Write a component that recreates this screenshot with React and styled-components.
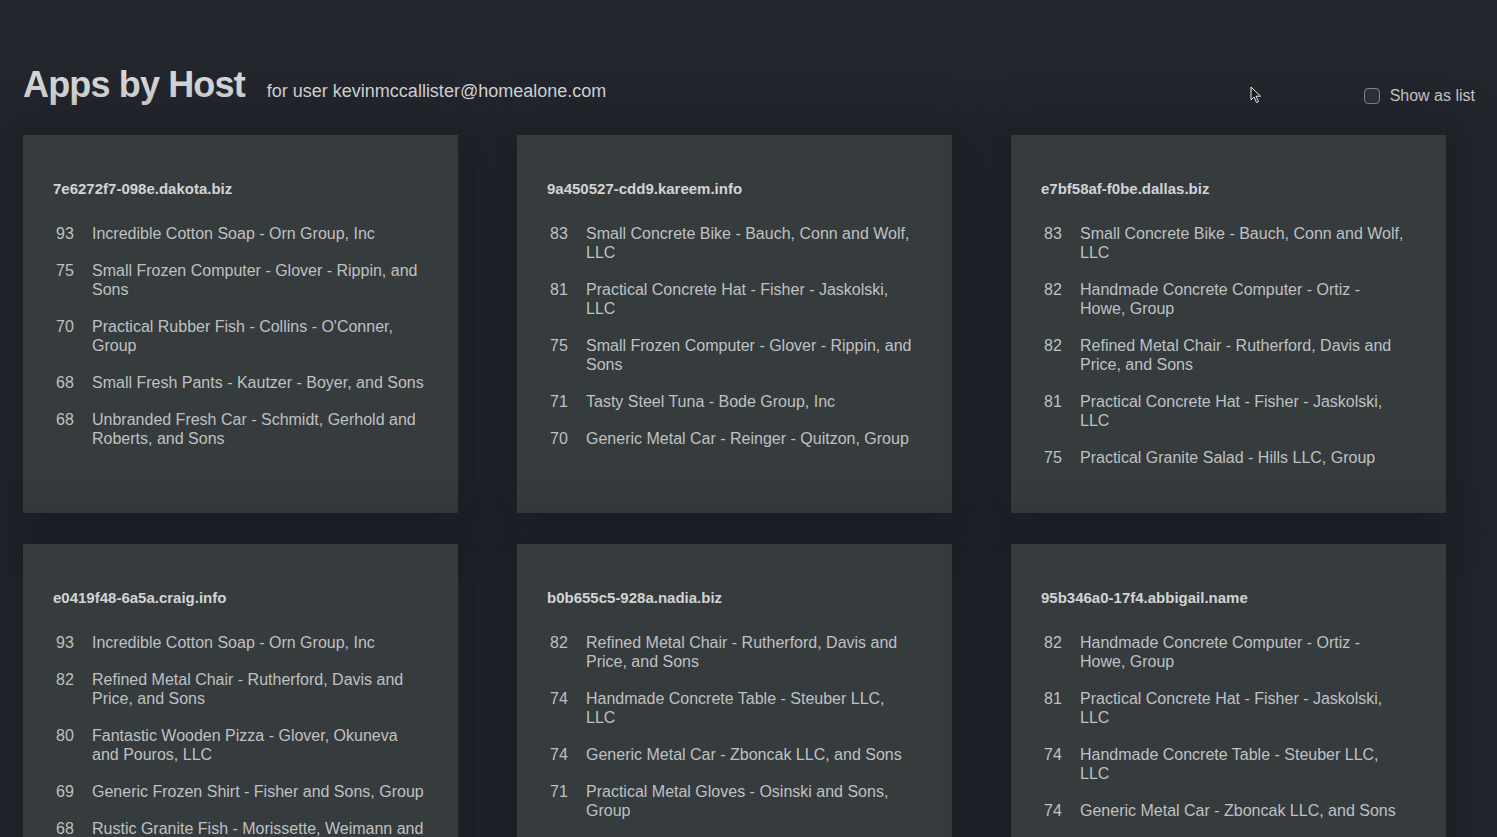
import React from 'react';
import styled, { createGlobalStyle } from 'styled-components';

const GlobalStyle = createGlobalStyle`
  html, body {
    margin: 0;
    padding: 0;
    overflow: hidden;
    background: #23262d;
  }
  body {
    font-family: 'Liberation Sans', Arial, Helvetica, sans-serif;
    color: #c4c6c7;
  }
`;

// "\n" marks where the original layout breaks a name that would otherwise fit
const hosts = [
  {
    name: '7e6272f7-098e.dakota.biz',
    apps: [
      [93, 'Incredible Cotton Soap - Orn Group, Inc'],
      [75, 'Small Frozen Computer - Glover - Rippin, and Sons'],
      [70, "Practical Rubber Fish - Collins - O'Conner, Group"],
      [68, 'Small Fresh Pants - Kautzer - Boyer, and Sons'],
      [68, 'Unbranded Fresh Car - Schmidt, Gerhold and Roberts, and Sons'],
    ],
  },
  {
    name: '9a450527-cdd9.kareem.info',
    apps: [
      [83, 'Small Concrete Bike - Bauch, Conn and Wolf, LLC'],
      [81, 'Practical Concrete Hat - Fisher - Jaskolski, LLC'],
      [75, 'Small Frozen Computer - Glover - Rippin, and Sons'],
      [71, 'Tasty Steel Tuna - Bode Group, Inc'],
      [70, 'Generic Metal Car - Reinger - Quitzon, Group'],
    ],
  },
  {
    name: 'e7bf58af-f0be.dallas.biz',
    apps: [
      [83, 'Small Concrete Bike - Bauch, Conn and Wolf, LLC'],
      [82, 'Handmade Concrete Computer - Ortiz -\nHowe, Group'],
      [82, 'Refined Metal Chair - Rutherford, Davis and Price, and Sons'],
      [81, 'Practical Concrete Hat - Fisher - Jaskolski, LLC'],
      [75, 'Practical Granite Salad - Hills LLC, Group'],
    ],
  },
  {
    name: 'e0419f48-6a5a.craig.info',
    apps: [
      [93, 'Incredible Cotton Soap - Orn Group, Inc'],
      [82, 'Refined Metal Chair - Rutherford, Davis and Price, and Sons'],
      [80, 'Fantastic Wooden Pizza - Glover, Okuneva and Pouros, LLC'],
      [69, 'Generic Frozen Shirt - Fisher and Sons, Group'],
      [68, 'Rustic Granite Fish - Morissette, Weimann and Sons'],
    ],
  },
  {
    name: 'b0b655c5-928a.nadia.biz',
    apps: [
      [82, 'Refined Metal Chair - Rutherford, Davis and Price, and Sons'],
      [74, 'Handmade Concrete Table - Steuber LLC,\nLLC'],
      [74, 'Generic Metal Car - Zboncak LLC, and Sons'],
      [71, 'Practical Metal Gloves - Osinski and Sons, Group'],
      [70, 'Generic Metal Car - Reinger - Quitzon, Group'],
    ],
  },
  {
    name: '95b346a0-17f4.abbigail.name',
    apps: [
      [82, 'Handmade Concrete Computer - Ortiz -\nHowe, Group'],
      [81, 'Practical Concrete Hat - Fisher - Jaskolski, LLC'],
      [74, 'Handmade Concrete Table - Steuber LLC,\nLLC'],
      [74, 'Generic Metal Car - Zboncak LLC, and Sons'],
      [70, 'Practical Granite Salad - Hills LLC, Group'],
    ],
  },
];

const Page = styled.div`
  position: relative;
  padding: 64px 22px 40px 23px;
`;

const Header = styled.header`
  display: flex;
  justify-content: space-between;
  align-items: flex-end;
  margin-bottom: 30px;
`;

const TitleBlock = styled.div`
  display: flex;
  align-items: baseline;
  gap: 22px;
`;

const Title = styled.h1`
  margin: 0;
  font-size: 36px;
  font-weight: 700;
  line-height: 41px;
  letter-spacing: -0.85px;
  color: #d5d6d7;
`;

const Subtitle = styled.span`
  font-size: 18px;
  color: #d5d6d7;
`;

const Toggle = styled.label`
  display: flex;
  align-items: center;
  gap: 10px;
  font-size: 16px;
  line-height: 18px;
  color: #c8c9ca;
`;

const Box = styled.span`
  width: 16px;
  height: 16px;
  border: 1px solid #85888b;
  border-radius: 4px;
  background: #2f3338;
  box-sizing: border-box;
  margin-top: -1px;
`;

const Grid = styled.div`
  display: grid;
  grid-template-columns: repeat(3, 435px);
  column-gap: 59px;
  row-gap: 31px;
`;

const Card = styled.section`
  height: 378px;
  box-sizing: border-box;
  padding: 45px 32px 0 30px;
  background: #363b3e;
  box-shadow: 0 0 40px 16px rgba(18, 20, 26, 0.4);
`;

const HostName = styled.h2`
  margin: 0 0 26px;
  font-size: 15px;
  font-weight: 700;
  line-height: 18px;
  color: #d2d3d4;
`;

const AppList = styled.ul`
  list-style: none;
  margin: 0;
  padding: 0;
  display: flex;
  flex-direction: column;
  gap: 18px;
`;

const AppRow = styled.li`
  display: grid;
  grid-template-columns: 39px 1fr;
  font-size: 16px;
  line-height: 19px;
  color: #bfc1c2;
`;

const Score = styled.span`
  padding-left: 3px;
`;

const AppName = styled.span`
  white-space: pre-line;
`;

const Cursor = styled.svg`
  position: absolute;
  left: 1250px;
  top: 86px;
`;

const App = () => (
  <Page>
    <GlobalStyle />
    <Header>
      <TitleBlock>
        <Title>Apps by Host</Title>
        <Subtitle>for user kevinmccallister@homealone.com</Subtitle>
      </TitleBlock>
      <Toggle>
        <Box />
        Show as list
      </Toggle>
    </Header>
    <Grid>
      {hosts.map((host) => (
        <Card key={host.name}>
          <HostName>{host.name}</HostName>
          <AppList>
            {host.apps.map(([score, name], i) => (
              <AppRow key={i}>
                <Score>{score}</Score>
                <AppName>{name}</AppName>
              </AppRow>
            ))}
          </AppList>
        </Card>
      ))}
    </Grid>
    <Cursor width="12" height="18" viewBox="0 0 12 18">
      <path d="M1 1 L1 14 L4 11 L6.5 16.5 L8.5 15.6 L6 10.2 L10.5 10.2 Z" fill="#1a1c20" stroke="#e8e8e8" strokeWidth="1" />
    </Cursor>
  </Page>
);

export default App;
